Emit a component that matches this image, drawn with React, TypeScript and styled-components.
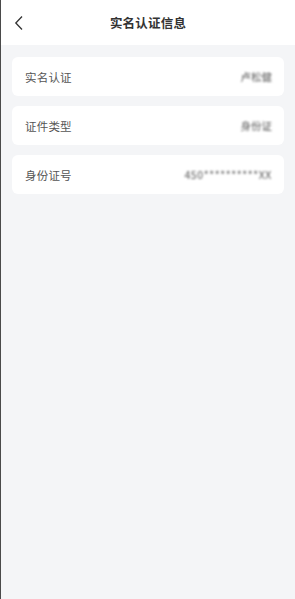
import React from 'react';
import styled, { createGlobalStyle } from 'styled-components';

const GlobalStyle = createGlobalStyle`
  html, body {
    margin: 0;
    padding: 0;
    background: #f4f5f7;
  }
  body {
    font-family: "Noto Sans CJK SC", "Noto Sans", sans-serif;
  }
`;

const Page = styled.div`
  min-height: 599px;
  background: #f4f5f7;
  border-left: 1px solid #4a4a4a;
  box-sizing: border-box;
`;

const Header = styled.header`
  height: 45px;
  background: #ffffff;
  display: grid;
  grid-template-columns: 40px 1fr 40px;
  align-items: center;
`;

const BackButton = styled.button`
  background: none;
  border: none;
  padding: 0 0 0 13px;
  height: 100%;
  display: flex;
  align-items: center;
  cursor: pointer;
`;

const Title = styled.h1`
  margin: 0;
  text-align: center;
  font-size: 12.5px;
  font-weight: 700;
  color: #333333;
  letter-spacing: 0.2px;
`;

const List = styled.div`
  display: flex;
  flex-direction: column;
  gap: 10px;
  padding: 12px 11px 0 11px;
`;

const Card = styled.div`
  height: 39px;
  background: #ffffff;
  border-radius: 6px;
  display: flex;
  align-items: center;
  justify-content: space-between;
  padding: 0 12px 0 13px;
`;

const Label = styled.span`
  font-size: 11.5px;
  color: #555555;
  letter-spacing: 0.2px;
`;

const Value = styled.span<{ $spaced?: boolean }>`
  font-size: 10.5px;
  color: #555555;
  letter-spacing: ${({ $spaced }) => ($spaced ? '0.6px' : '0')};
  filter: blur(0.9px);
`;

const rows = [
  { label: '实名认证', value: '卢松健' },
  { label: '证件类型', value: '身份证' },
  { label: '身份证号', value: '450**********XX', spaced: true },
];

const App: React.FC = () => {
  return (
    <>
      <GlobalStyle />
      <Page>
        <Header>
          <BackButton aria-label="返回">
            <svg width="10" height="16" viewBox="0 0 10 16" fill="none">
              <path d="M8 1.5L1.8 8 8 14.5" stroke="#333" strokeWidth="1.3" />
            </svg>
          </BackButton>
          <Title>实名认证信息</Title>
          <span />
        </Header>
        <List>
          {rows.map((r) => (
            <Card key={r.label}>
              <Label>{r.label}</Label>
              <Value $spaced={r.spaced}>{r.value}</Value>
            </Card>
          ))}
        </List>
      </Page>
    </>
  );
};

export default App;
